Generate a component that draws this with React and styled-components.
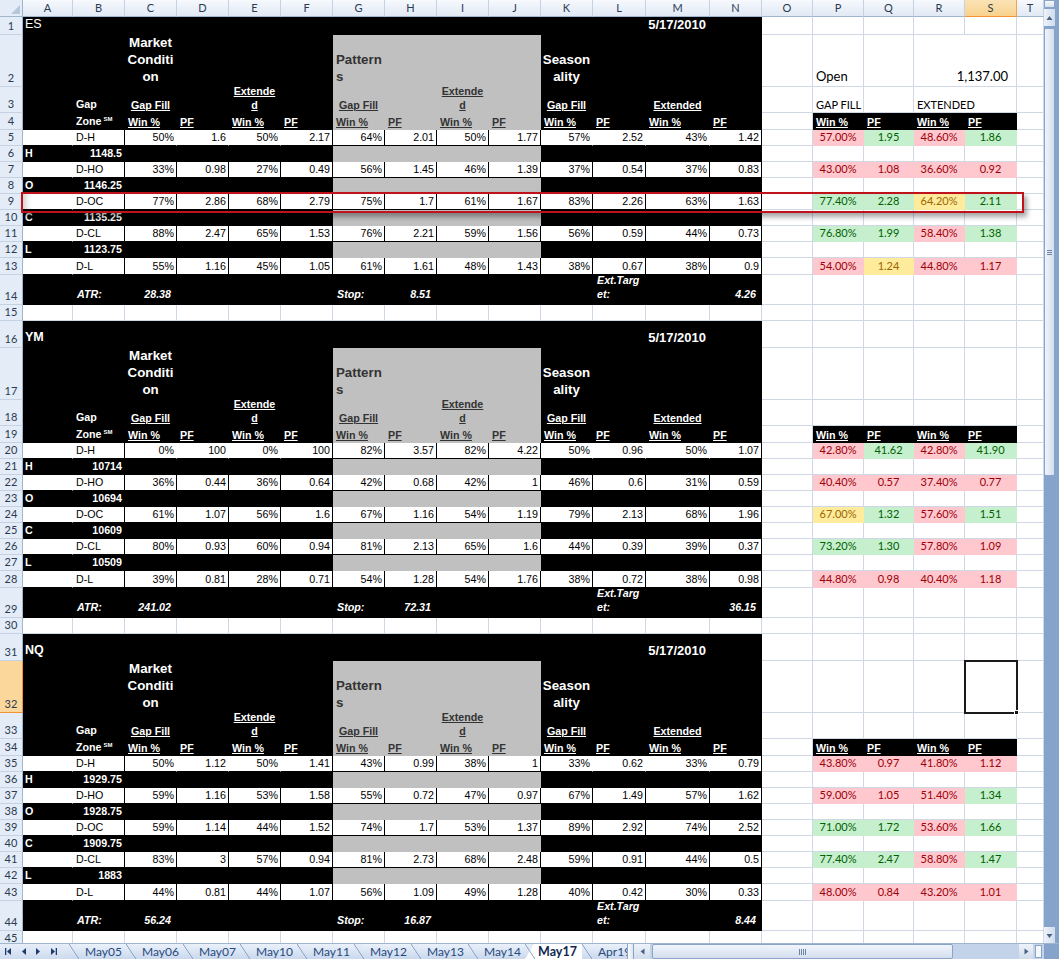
import React from "react";
import styled, { createGlobalStyle, css } from "styled-components";

const ARIAL = '"Liberation Sans", Arial, sans-serif';
const CALIBRI = 'Lato, "Open Sans", sans-serif';
const GRID = "#d0d7e5";

const GlobalStyle = createGlobalStyle`
  html, body {
    margin: 0;
    padding: 0;
    background: #fff;
    overflow: hidden;
  }
  body {
    width: 1059px;
    height: 959px;
    font-family: ${ARIAL};
  }
`;

// column widths of the visible sheet: row header, A..T
const COL_TEMPLATE =
  "23px 50px repeat(10, 52px) 53px 64px 52px 51px 51px 50px 51px 52px 27px";
const COLS = "ABCDEFGHIJKLMNOPQRST".split("");

const blockHeights = (first) => [
  first ? 18 : 27, 52, 26, 17, 16, 16, 16, 16, 16, 16, 16, 16, 17, 30, 16,
];

const BLOCKS = [
  {
    ticker: "ES",
    date: "5/17/2010",
    open: "1,137.00",
    levels: [["H", "1148.5"], ["O", "1146.25"], ["C", "1135.25"], ["L", "1123.75"]],
    atr: "28.38",
    stop: "8.51",
    target: "4.26",
    zones: [
      ["D-H", "50% 1.6 50% 2.17 64% 2.01 50% 1.77 57% 2.52 43% 1.42", "57.00%:r 1.95:g 48.60%:r 1.86:g"],
      ["D-HO", "33% 0.98 27% 0.49 56% 1.45 46% 1.39 37% 0.54 37% 0.83", "43.00%:r 1.08:r 36.60%:r 0.92:r"],
      ["D-OC", "77% 2.86 68% 2.79 75% 1.7 61% 1.67 83% 2.26 63% 1.63", "77.40%:g 2.28:g 64.20%:y 2.11:g"],
      ["D-CL", "88% 2.47 65% 1.53 76% 2.21 59% 1.56 56% 0.59 44% 0.73", "76.80%:g 1.99:g 58.40%:r 1.38:g"],
      ["D-L", "55% 1.16 45% 1.05 61% 1.61 48% 1.43 38% 0.67 38% 0.9", "54.00%:r 1.24:y 44.80%:r 1.17:r"],
    ],
  },
  {
    ticker: "YM",
    date: "5/17/2010",
    levels: [["H", "10714"], ["O", "10694"], ["C", "10609"], ["L", "10509"]],
    atr: "241.02",
    stop: "72.31",
    target: "36.15",
    zones: [
      ["D-H", "0% 100 0% 100 82% 3.57 82% 4.22 50% 0.96 50% 1.07", "42.80%:r 41.62:g 42.80%:r 41.90:g"],
      ["D-HO", "36% 0.44 36% 0.64 42% 0.68 42% 1 46% 0.6 31% 0.59", "40.40%:r 0.57:r 37.40%:r 0.77:r"],
      ["D-OC", "61% 1.07 56% 1.6 67% 1.16 54% 1.19 79% 2.13 68% 1.96", "67.00%:y 1.32:g 57.60%:r 1.51:g"],
      ["D-CL", "80% 0.93 60% 0.94 81% 2.13 65% 1.6 44% 0.39 39% 0.37", "73.20%:g 1.30:g 57.80%:r 1.09:r"],
      ["D-L", "39% 0.81 28% 0.71 54% 1.28 54% 1.76 38% 0.72 38% 0.98", "44.80%:r 0.98:r 40.40%:r 1.18:r"],
    ],
  },
  {
    ticker: "NQ",
    date: "5/17/2010",
    levels: [["H", "1929.75"], ["O", "1928.75"], ["C", "1909.75"], ["L", "1883"]],
    atr: "56.24",
    stop: "16.87",
    target: "8.44",
    zones: [
      ["D-H", "50% 1.12 50% 1.41 43% 0.99 38% 1 33% 0.62 33% 0.79", "43.80%:r 0.97:r 41.80%:r 1.12:r"],
      ["D-HO", "59% 1.16 53% 1.58 55% 0.72 47% 0.97 67% 1.49 57% 1.62", "59.00%:r 1.05:r 51.40%:r 1.34:g"],
      ["D-OC", "59% 1.14 44% 1.52 74% 1.7 53% 1.37 89% 2.92 74% 2.52", "71.00%:g 1.72:g 53.60%:r 1.66:g"],
      ["D-CL", "83% 3 57% 0.94 81% 2.73 68% 2.48 59% 0.91 44% 0.5", "77.40%:g 2.47:g 58.80%:r 1.47:g"],
      ["D-L", "44% 0.81 44% 1.07 56% 1.09 49% 1.28 40% 0.42 30% 0.33", "48.00%:r 0.84:r 43.20%:r 1.01:r"],
    ],
  },
];

const TONES = {
  plain: { bg: "transparent", fg: "#000", line: GRID },
  black: { bg: "#000", fg: "#fff", line: "#000" },
  gray: { bg: "#c0c0c0", fg: "#333", line: "#c0c0c0" },
  white: { bg: "#fff", fg: "#000", line: "#000" },
  r: { bg: "#ffc7ce", fg: "#9c0006", line: "#ffc7ce" },
  g: { bg: "#c6efce", fg: "#006100", line: "#c6efce" },
  y: { bg: "#ffeb9c", fg: "#9c6500", line: "#ffeb9c" },
};

const VARIANTS = {
  data: css`font: 10.7px/13px ${ARIAL}; padding-bottom: 1px;`,
  label: css`font: bold 10.7px/13px ${ARIAL}; padding-bottom: 1px;`,
  sub: css`font: bold 10.7px/14px ${ARIAL}; text-decoration: underline;`,
  section: css`font: bold 13.3px/17px ${ARIAL}; padding-bottom: 1px;`,
  title: css`font: bold 12.5px/15px ${ARIAL}; padding-bottom: 2px;`,
  titleLight: css`font: 12.5px/15px ${ARIAL}; padding-bottom: 2px;`,
  date: css`font: bold 13px/15px ${ARIAL}; padding-bottom: 2px;`,
  foot: css`font: italic bold 10.7px/13.3px ${ARIAL}; padding-bottom: 3px;`,
  cal: css`font: 13px/18px ${CALIBRI}; padding-bottom: 1px;`,
  calSmall: css`font: 11px/14px ${CALIBRI};`,
  cf: css`font: 11px/14px ${CALIBRI}; padding-bottom: 1px;`,
};

const ALIGN = { left: "flex-start", center: "center", right: "flex-end" };

/* ---------- sheet ---------- */

const Window = styled.div`
  width: 1059px;
  height: 959px;
  display: flex;
  flex-direction: column;
  overflow: hidden;
`;

const Main = styled.div`
  display: flex;
  height: 943px;
  flex: none;
`;

const Sheet = styled.div`
  position: relative;
  width: 1044px;
  height: 943px;
  flex: none;
  overflow: hidden;
  background: #fff;
  display: grid;
  grid-template-columns: ${COL_TEMPLATE};
  grid-template-rows: ${(p) => p.$rows};
  align-content: start;
`;

const Corner = styled.div`
  box-sizing: border-box;
  background: #e4ecf7;
  border-right: 1px solid #9eb6ce;
  border-bottom: 1px solid #9eb6ce;
  display: flex;
  align-items: flex-end;
  justify-content: flex-end;
  padding: 0 2px 2px 0;
`;

const ColHead = styled.div`
  box-sizing: border-box;
  display: flex;
  align-items: center;
  justify-content: center;
  font: 11px/14px ${CALIBRI};
  color: #2b3a52;
  background: ${(p) =>
    p.$sel
      ? "linear-gradient(#fbe3b6, #f8d28d)"
      : "linear-gradient(#f6f9fd, #e1e9f5)"};
  border-right: 1px solid ${(p) => (p.$sel ? "#f2a24c" : "#c5d2e3")};
  border-bottom: 1px solid ${(p) => (p.$sel ? "#f29436" : "#9eb6ce")};
`;

const RowHead = styled.div`
  box-sizing: border-box;
  display: flex;
  align-items: flex-end;
  justify-content: center;
  padding-bottom: 1px;
  font: 11px/14px ${CALIBRI};
  color: #2b3a52;
  background: ${(p) => (p.$sel ? "#fcd79b" : "#e4ecf7")};
  border-right: 1px solid ${(p) => (p.$sel ? "#f29436" : "#9eb6ce")};
  border-bottom: 1px solid ${(p) => (p.$sel ? "#f29436" : "#c5d2e3")};
`;

const Cell = styled.div`
  box-sizing: border-box;
  min-width: 0;
  position: relative;
  display: flex;
  flex-direction: column;
  justify-content: flex-end;
  align-items: ${(p) => ALIGN[p.$align]};
  text-align: ${(p) => p.$align};
  white-space: nowrap;
  padding: 0 ${(p) => p.$padR}px 0 ${(p) => p.$padL}px;
  background: ${(p) => p.$bg};
  color: ${(p) => p.$fg};
  border-right: 1px solid ${(p) => p.$lineR};
  border-bottom: 1px solid ${(p) => p.$lineB};
  ${(p) => VARIANTS[p.$v]}
  ${(p) =>
    p.$sel &&
    css`
      z-index: 2;
      outline: 2px solid #1a1a1a;
      outline-offset: -1px;
      &::after {
        content: "";
        position: absolute;
        right: -3px;
        bottom: -3px;
        width: 5px;
        height: 5px;
        background: #111;
        border: 1px solid #fff;
        box-sizing: border-box;
      }
    `}
`;

const Sup = styled.span`
  font-size: 6px;
  vertical-align: 4px;
  margin-left: 2px;
`;

// red box drawn over row 9
const Highlight = styled.div`
  position: absolute;
  left: 21px;
  top: 192px;
  width: 1003px;
  height: 21px;
  box-sizing: border-box;
  border: 2px solid #c0121b;
  box-shadow: 3px 4px 5px rgba(0, 0, 0, 0.35),
    inset 7px 0 6px -4px rgba(0, 0, 0, 0.2);
  pointer-events: none;
  z-index: 3;
`;

/* ---------- scrollbars & tabs ---------- */

const VScroll = styled.div`
  width: 15px;
  flex: none;
  display: flex;
  flex-direction: column;
  background: #86a3cc;
  padding-right: 4px;
  box-sizing: border-box;
`;

const SplitBox = styled.div`
  height: 8px;
  flex: none;
  box-sizing: border-box;
  border: 1px solid #8ba3c6;
  background: linear-gradient(#f7f9fc, #d6e0ee);
  margin-bottom: 1px;
`;

const ArrowBtn = styled.div`
  flex: none;
  height: ${(p) => p.$h || 16}px;
  width: ${(p) => p.$w || "auto"};
  display: flex;
  align-items: center;
  justify-content: center;
  background: linear-gradient(${(p) => (p.$horizontal ? "180deg" : "90deg")}, #eef3fa, #d0dcec);
`;

const VThumb = styled.div`
  flex: none;
  height: 448px;
  margin-top: 2px;
  box-sizing: border-box;
  border: 1px solid #8ba3c7;
  border-radius: 2px;
  background: linear-gradient(90deg, #f1f5fb, #d3deee);
  display: flex;
  flex-direction: column;
  align-items: center;
  justify-content: center;
  gap: 1px;
`;

const GripLine = styled.span`
  display: block;
  width: ${(p) => (p.$vertical ? "1px" : "5px")};
  height: ${(p) => (p.$vertical ? "6px" : "1px")};
  background: #6c84a8;
`;

const Track = styled.div`
  flex: 1;
`;

const BottomBar = styled.div`
  display: flex;
  height: 16px;
  flex: none;
  background: linear-gradient(#e7eef8, #cddbef);
  border-top: 1px solid #9eb6ce;
  box-sizing: border-box;
`;

const NavButtons = styled.div`
  width: 69px;
  flex: none;
  display: flex;
  align-items: center;
  gap: 6px;
  padding-left: 4px;
  box-sizing: border-box;
`;

const TabStrip = styled.div`
  display: flex;
  width: 558px;
  flex: none;
  overflow: hidden;
`;

const Tab = styled.div`
  position: relative;
  isolation: isolate;
  flex: none;
  width: 57px;
  box-sizing: border-box;
  padding-left: ${(p) => (p.$active ? 13 : 16)}px;
  display: flex;
  align-items: center;
  font: ${(p) => (p.$active ? "bold 12.5px" : "12px")} / 15px ${CALIBRI};
  color: ${(p) => (p.$active ? "#10284f" : "#27497c")};
  &::before {
    content: "";
    position: absolute;
    inset: 0;
    z-index: -1;
    clip-path: polygon(0 100%, 9px 0, 100% 0, 100% 100%);
    background: ${(p) =>
      p.$active ? "#fff" : "linear-gradient(#eaf1fa, #c9d8ee)"};
  }
  &::after {
    content: "";
    position: absolute;
    left: 0;
    top: 0;
    width: 10px;
    height: 100%;
    background: linear-gradient(
      to top right,
      transparent calc(50% - 0.7px),
      #7b95bb,
      transparent calc(50% + 0.7px)
    );
  }
`;

const Splitter = styled.div`
  width: 7px;
  flex: none;
  box-sizing: border-box;
  border-left: 1px solid #8ba3c6;
  border-right: 1px solid #8ba3c6;
  background: linear-gradient(90deg, #fbfcfe, #dbe4f1);
`;

const HScroll = styled.div`
  width: 410px;
  flex: none;
  display: flex;
  align-items: stretch;
  background: #c3d3ea;
`;

const HThumb = styled.div`
  width: 301px;
  flex: none;
  margin-left: 2px;
  box-sizing: border-box;
  border: 1px solid #8ba3c7;
  border-radius: 2px;
  background: linear-gradient(#f1f5fb, #d3deee);
  display: flex;
  align-items: center;
  justify-content: center;
  gap: 1px;
`;

const MiniBox = styled.div`
  width: 7px;
  flex: none;
  margin: 1px 2px;
  box-sizing: border-box;
  border: 1px solid #8ba3c6;
  background: #f4f7fb;
`;

const FrameCorner = styled.div`
  flex: 1;
  background: #86a3cc;
`;

/* ---------- icons ---------- */

const Triangle = ({ dir, size = 7, color = "#4d6185" }) => {
  const d = {
    up: "M0.5 6 L3.5 2 L6.5 6 Z",
    down: "M0.5 2 L3.5 6 L6.5 2 Z",
    left: "M5.5 0.5 L1.5 3.5 L5.5 6.5 Z",
    right: "M1.5 0.5 L5.5 3.5 L1.5 6.5 Z",
  }[dir];
  return (
    <svg width={size} height={size} viewBox="0 0 7 7">
      <path d={d} fill={color} />
    </svg>
  );
};

const NavIcon = ({ dir, bar }) => (
  <svg width="9" height="9" viewBox="0 0 9 9">
    {bar && <rect x={dir === "left" ? 1 : 6.7} y="1" width="1.3" height="7" fill="#1f3b6b" />}
    <path
      d={dir === "left" ? "M7 1 L3 4.5 L7 8 Z" : "M2 1 L6 4.5 L2 8 Z"}
      fill="#1f3b6b"
    />
  </svg>
);

/* ---------- data to rows ---------- */

const blank = () => Array.from({ length: 20 }, () => ({ tone: "plain" }));
const fill = (row, from, to, tone) => {
  for (let i = from; i <= to; i++) row[i] = { tone };
};

const bandRow = () => {
  const row = blank();
  fill(row, 0, 5, "black");
  fill(row, 6, 9, "gray");
  fill(row, 10, 13, "black");
  return row;
};

function buildBlock(b, bi) {
  const rows = [];

  const title = blank();
  fill(title, 0, 13, "black");
  title[0] = { tone: "black", v: bi === 0 ? "titleLight" : "title", text: b.ticker, padL: 2 };
  title[12] = { tone: "black", v: "date", align: "right", text: b.date };
  rows.push(title);

  const section = bandRow();
  section[2] = { tone: "black", v: "section", align: "center", lines: ["Market", "Conditi", "on"] };
  section[6] = { tone: "gray", v: "section", lines: ["Pattern", "s"] };
  section[10] = { tone: "black", v: "section", align: "center", lines: ["Season", "ality"] };
  if (b.open) {
    section[15] = { tone: "plain", v: "cal", text: "Open" };
    section[17] = { tone: "plain", noRight: true };
    section[18] = { tone: "plain", v: "cal", align: "right", text: b.open, padR: 8 };
  }
  rows.push(section);

  const sub = bandRow();
  sub[1] = { tone: "black", v: "label", text: "Gap" };
  sub[2] = { tone: "black", v: "sub", align: "center", text: "Gap Fill" };
  sub[4] = { tone: "black", v: "sub", align: "center", lines: ["Extende", "d"] };
  sub[6] = { tone: "gray", v: "sub", align: "center", text: "Gap Fill" };
  sub[8] = { tone: "gray", v: "sub", align: "center", lines: ["Extende", "d"] };
  sub[10] = { tone: "black", v: "sub", align: "center", text: "Gap Fill" };
  sub[12] = { tone: "black", v: "sub", align: "center", text: "Extended" };
  if (b.open) {
    sub[15] = { tone: "plain", v: "calSmall", text: "GAP FILL" };
    sub[17] = { tone: "plain", v: "calSmall", text: "EXTENDED", noRight: true };
  }
  rows.push(sub);

  const head = bandRow();
  head[1] = { tone: "black", v: "label", text: "Zone", sup: "SM" };
  for (let k = 0; k < 12; k++) {
    head[2 + k] = { tone: head[2 + k].tone, v: "sub", text: k % 2 ? "PF" : "Win %" };
  }
  for (let k = 0; k < 4; k++) {
    head[15 + k] = { tone: "black", v: "sub", text: k % 2 ? "PF" : "Win %" };
  }
  rows.push(head);

  b.zones.forEach(([name, vals, stats], zi) => {
    const row = blank();
    row[0] = { tone: "white", edge: "#fff" };
    row[1] = { tone: "white", text: name };
    vals.split(" ").forEach((val, k) => {
      const open = zi === 0 && (k <= 2 || (k >= 8 && k <= 10));
      row[2 + k] = { tone: "white", text: val, align: "right", padR: 2, edge: open ? "#fff" : "#000" };
    });
    stats.split(" ").forEach((s, k) => {
      const [val, tone] = s.split(":");
      row[15 + k] = { tone, v: "cf", align: "center", text: val };
    });
    rows.push(row);

    if (zi < 4) {
      const [letter, level] = b.levels[zi];
      const lv = bandRow();
      lv[0] = { tone: "black", v: "label", text: letter, padL: 2 };
      lv[1] = { tone: "black", v: "label", align: "right", text: level, padR: 2 };
      rows.push(lv);
    }
  });

  const foot = blank();
  fill(foot, 0, 13, "black");
  foot[1] = { tone: "black", v: "foot", text: "ATR:", padL: 4 };
  foot[2] = { tone: "black", v: "foot", align: "right", text: b.atr, padR: 5 };
  foot[6] = { tone: "black", v: "foot", text: "Stop:", padL: 4 };
  foot[7] = { tone: "black", v: "foot", align: "right", text: b.stop, padR: 5 };
  foot[11] = { tone: "black", v: "foot", lines: ["Ext.Targ", "et:"], padL: 4 };
  foot[13] = { tone: "black", v: "foot", align: "right", text: b.target, padR: 5 };
  rows.push(foot);

  rows.push(blank());
  return rows;
}

const ROWS = BLOCKS.flatMap((b, bi) => buildBlock(b, bi));
const ROW_TEMPLATE = ["17px"]
  .concat(BLOCKS.flatMap((b, bi) => blockHeights(bi === 0).map((h) => `${h}px`)))
  .join(" ");

const SELECTED_ROW = 32;
const SELECTED_COL = 18; // S

const SheetCell = ({ cell, selected }) => {
  const tone = TONES[cell.tone];
  const lineR = cell.noRight ? "transparent" : cell.edge || tone.line;
  const content = cell.lines
    ? cell.lines.map((l, i) => (
        <React.Fragment key={i}>
          {i > 0 && <br />}
          {l}
        </React.Fragment>
      ))
    : cell.text;

  return (
    <Cell
      $bg={tone.bg}
      $fg={tone.fg}
      $lineR={lineR}
      $lineB={tone.line}
      $v={cell.v || "data"}
      $align={cell.align || "left"}
      $padL={cell.padL ?? 3}
      $padR={cell.padR ?? 3}
      $sel={selected}
    >
      {content != null && (
        <span>
          {content}
          {cell.sup && <Sup>{cell.sup}</Sup>}
        </span>
      )}
    </Cell>
  );
};

const TABS = ["May05", "May06", "May07", "May10", "May11", "May12", "May13", "May14", "May17", "Apr19"];

export default function App() {
  return (
    <>
      <GlobalStyle />
      <Window>
        <Main>
          <Sheet $rows={ROW_TEMPLATE}>
            <Corner>
              <svg width="9" height="9" viewBox="0 0 9 9">
                <path d="M9 0 L9 9 L0 9 Z" fill="#b6c6db" />
              </svg>
            </Corner>
            {COLS.map((c, i) => (
              <ColHead key={c} $sel={i === SELECTED_COL}>
                {c}
              </ColHead>
            ))}
            {ROWS.map((row, r) => (
              <React.Fragment key={r}>
                <RowHead $sel={r + 1 === SELECTED_ROW}>{r + 1}</RowHead>
                {row.map((cell, c) => (
                  <SheetCell
                    key={c}
                    cell={cell}
                    selected={r + 1 === SELECTED_ROW && c === SELECTED_COL}
                  />
                ))}
              </React.Fragment>
            ))}
            <Highlight />
          </Sheet>

          <VScroll>
            <SplitBox />
            <ArrowBtn $h={17}>
              <Triangle dir="up" />
            </ArrowBtn>
            <VThumb>
              <GripLine />
              <GripLine />
              <GripLine />
            </VThumb>
            <Track />
            <ArrowBtn $h={16}>
              <Triangle dir="down" />
            </ArrowBtn>
          </VScroll>
        </Main>

        <BottomBar>
          <NavButtons>
            <NavIcon dir="left" bar />
            <NavIcon dir="left" />
            <NavIcon dir="right" />
            <NavIcon dir="right" bar />
          </NavButtons>
          <TabStrip>
            {TABS.map((t) => (
              <Tab key={t} $active={t === "May17"}>
                {t}
              </Tab>
            ))}
          </TabStrip>
          <Splitter />
          <HScroll>
            <ArrowBtn $w="16px" $h={15} $horizontal>
              <Triangle dir="left" />
            </ArrowBtn>
            <HThumb>
              <GripLine $vertical />
              <GripLine $vertical />
              <GripLine $vertical />
              <GripLine $vertical />
            </HThumb>
            <Track />
            <ArrowBtn $w="14px" $h={15} $horizontal>
              <Triangle dir="right" />
            </ArrowBtn>
            <MiniBox />
          </HScroll>
          <FrameCorner />
        </BottomBar>
      </Window>
    </>
  );
}
